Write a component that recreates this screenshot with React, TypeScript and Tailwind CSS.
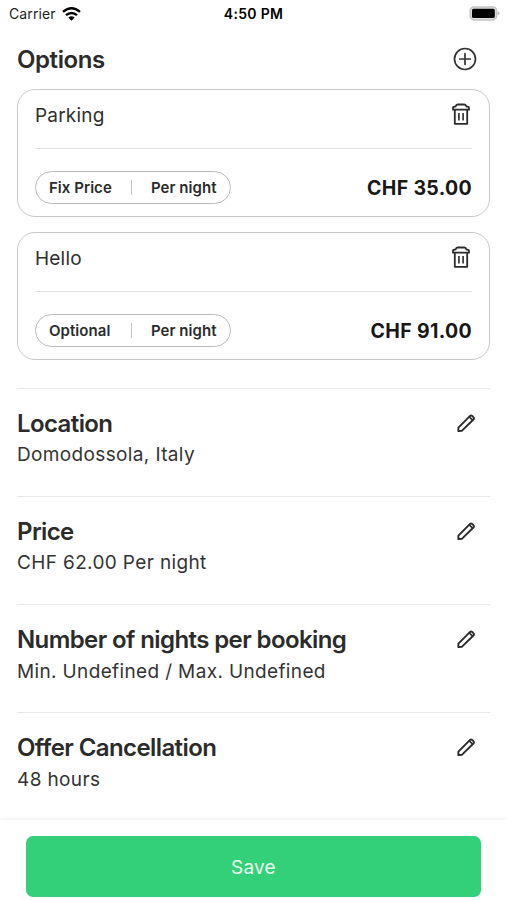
import React from "react";

function Wifi() {
  return (
    <svg className="ml-[6px] h-[14px] w-[19px]" viewBox="0 0 19 14" fill="none" stroke="#000" strokeWidth="2.4">
      <path d="M1 4.9Q9.5 -2.4 18 4.9" />
      <path d="M4 8.2Q9.5 3.6 15 8.2" />
      <path d="M9.5 13.8L6.3 10.6Q9.5 8 12.7 10.6Z" fill="#000" stroke="none" />
    </svg>
  );
}

function Battery() {
  return (
    <svg className="h-[15px] w-[31px]" viewBox="0 0 31 15">
      <rect x="1.2" y="0.9" width="26.4" height="13" rx="3.8" fill="#ddd" stroke="#c4c4c4" strokeWidth="1.5" />
      <rect x="3" y="2.7" width="22.8" height="9.4" rx="1.6" fill="#000" />
      <path d="M28.8 5.2Q30.6 5.8 30.6 7.3Q30.6 8.8 28.8 9.4Z" fill="#bdbdbd" />
    </svg>
  );
}

function Plus() {
  return (
    <svg className="size-6" viewBox="0 0 24 24" fill="none" stroke="#333" strokeWidth="1.7" strokeLinecap="round">
      <circle cx="12" cy="12" r="10.5" />
      <path d="M12 6.7V17.3M6.7 12H17.3" />
    </svg>
  );
}

function Pencil() {
  return (
    <svg className="size-5" viewBox="0 0 20 20" fill="none" stroke="#2b2b2b" strokeWidth="1.9" strokeLinejoin="round">
      <path d="M2.3 18L2.4 14.6L13.8 3.1Q15 1.9 16.2 3L17.4 4.1Q18.6 5.3 17.4 6.5L5.8 17.9Z" />
      <path d="M13.2 3.9L16.7 7.2" strokeWidth="1.6" />
    </svg>
  );
}

function Trash() {
  return (
    <svg className="-mt-px mr-[2px] h-[22px] w-[18px]" viewBox="0 0 18 22" fill="none" stroke="#2b2b2b" strokeWidth="1.8" strokeLinejoin="round">
      <path d="M1 6.7V5Q1 3.6 2.4 3.6H3.6Q4.2 1.5 5.6 1.5H12.4Q13.8 1.5 14.4 3.6H15.6Q17 3.6 17 5V6.7Z" />
      <path d="M2.8 6.7V20.8H15.2V6.7" />
      <path d="M6.9 10V17.6M11.1 10V17.6" strokeWidth="1.6" />
    </svg>
  );
}

function Option({ name, tag, price }: { name: string; tag: string; price: string }) {
  return (
    <section className="h-32 rounded-[18px] border border-[#c8c8c8] px-[17px]">
      <div className="flex h-[59px] items-start justify-between border-b border-[#ddd] pt-[14px]">
        <h3 className="text-[19px] leading-6 tracking-[0.2px] text-[#2e2e2e]">{name}</h3>
        <Trash />
      </div>
      <div className="flex items-center justify-between pt-[22px]">
        <div className="flex h-[33px] items-center rounded-full border border-[#bbb] px-[13px] text-[15px] leading-5 font-semibold tracking-[0.05px] text-[#2b2b2b]">
          <span className="min-w-[63px]">{tag}</span>
          <i className="mx-[19px] h-[15px] w-px bg-[#c4c4c4]" />
          <span>Per night</span>
        </div>
        <span className="text-[19.5px] leading-6 font-bold tracking-[0.35px] text-[#181818]">{price}</span>
      </div>
    </section>
  );
}

function Detail({ title, value }: { title: string; value: string }) {
  return (
    <section className="flex h-[108.3px] shrink-0 items-start justify-between border-t border-[#e8e8e8] pt-5 pr-[14px]">
      <div>
        <h2 className="text-[24px] leading-[30px] font-semibold tracking-[-0.6px] text-[#2b2b2b]">{title}</h2>
        <p className="mt-[2.4px] text-[19px] leading-[28px] tracking-[0.36px] text-[#333]">{value}</p>
      </div>
      <div className="pt-[4px]"><Pencil /></div>
    </section>
  );
}

export default function App() {
  return (
    <main className="flex h-[900px] flex-col overflow-hidden bg-white font-['Inter','Liberation_Sans',sans-serif]">
      <header className="grid h-[27px] shrink-0 grid-cols-3 items-center px-[9px] text-[14px] text-black">
        <div className="flex items-center tracking-[0.1px] text-[#222]">Carrier<Wifi /></div>
        <div className="text-center font-semibold tracking-[0.3px]">4:50 PM</div>
        <div className="-mr-[2px] flex justify-end"><Battery /></div>
      </header>
      <div className="flex min-h-0 flex-1 flex-col overflow-hidden px-[17px]">
        <div className="flex h-[62.4px] shrink-0 items-center justify-between pt-[2px] pr-[13px]">
          <h2 className="pt-px text-[24px] leading-8 font-semibold tracking-[-0.4px] text-[#2b2b2b]">Options</h2>
          <Plus />
        </div>
        <div className="mb-[27.2px] flex flex-col gap-[15px]">
          <Option name="Parking" tag="Fix Price" price="CHF 35.00" />
          <Option name="Hello" tag="Optional" price="CHF 91.00" />
        </div>
        <Detail title="Location" value="Domodossola, Italy" />
        <Detail title="Price" value="CHF 62.00 Per night" />
        <Detail title="Number of nights per booking" value="Min. Undefined / Max. Undefined" />
        <Detail title="Offer Cancellation" value="48 hours" />
      </div>
      <footer className="h-20 shrink-0 bg-white px-[26px] pt-4 shadow-[0_-1px_4px_rgba(0,0,0,0.08)]">
        <button className="h-[61px] w-full rounded-[7px] bg-[#34d079] pt-[3px] text-[19px] tracking-[0.2px] text-[#e9fff2]">Save</button>
      </footer>
    </main>
  );
}
